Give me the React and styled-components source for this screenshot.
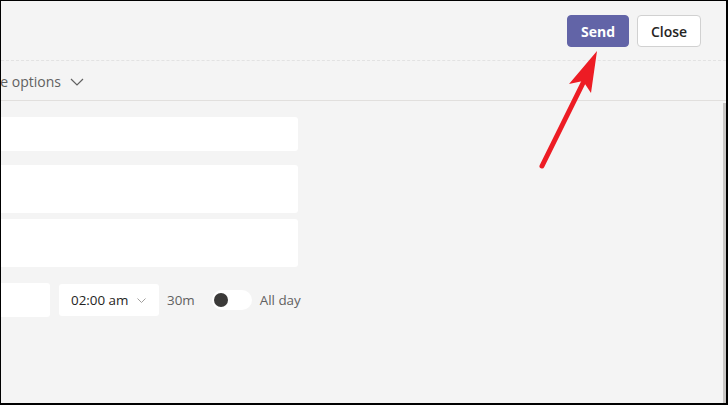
import React from "react";
import styled, { createGlobalStyle } from "styled-components";

const GlobalStyle = createGlobalStyle`
  html, body {
    margin: 0;
    padding: 0;
    background: #000;
  }
  body {
    font-family: "Open Sans", "Noto Sans", "Liberation Sans", sans-serif;
  }
`;

const Frame = styled.div`
  position: relative;
  box-sizing: border-box;
  width: 728px;
  height: 405px;
  border-style: solid;
  border-color: #000;
  border-width: 1px 2px 2px 1px;
  background: #f4f4f4;
  overflow: hidden;
  display: flex;
  flex-direction: column;
`;

const Header = styled.div`
  flex: none;
  height: 60px;
  display: flex;
  justify-content: flex-end;
  align-items: flex-start;
  gap: 8px;
  padding: 14px 25px 0 0;
  box-sizing: border-box;
  border-bottom: 1px dashed #e2e2e2;
`;

const Button = styled.button`
  box-sizing: border-box;
  height: 32px;
  padding: 0;
  width: ${(p) => (p.$primary ? "62px" : "64px")};
  border-radius: 4px;
  font-family: inherit;
  font-size: 14px;
  font-weight: ${(p) => (p.$primary ? 700 : 600)};
  color: ${(p) => (p.$primary ? "#fff" : "#252423")};
  background: ${(p) => (p.$primary ? "#6264a7" : "#fff")};
  border: 1px solid ${(p) => (p.$primary ? "#6264a7" : "#d1d1d1")};
  cursor: pointer;
`;

const OptionsRow = styled.div`
  flex: none;
  box-sizing: border-box;
  height: 40px;
  display: flex;
  align-items: center;
  padding-top: 2px;
  border-bottom: 1px solid #e1dfdd;
  color: #616161;
  font-size: 14px;
`;

const OptionsLabel = styled.div`
  width: 60px;
  display: flex;
  justify-content: flex-end;
  white-space: nowrap;
  line-height: 20px;
`;

const Chevron = styled.svg`
  margin-left: 9px;
  display: block;
`;

const Body = styled.div`
  flex: 1;
  display: flex;
`;

const Form = styled.div`
  flex: 1;
  margin-left: -120px;
  padding-top: 16px;
  display: flex;
  flex-direction: column;
`;

const Field = styled.div`
  width: 417px;
  height: ${(p) => p.$h}px;
  margin-bottom: ${(p) => p.$gap}px;
  background: #fff;
  border-radius: 3px;
`;

const DateRow = styled.div`
  display: flex;
  align-items: center;
  height: 34px;
`;

const DateBox = styled.div`
  width: 169px;
  height: 34px;
  background: #fff;
  border-radius: 3px;
`;

const TimeSelect = styled.div`
  box-sizing: border-box;
  margin-left: 9px;
  width: 100px;
  height: 32px;
  background: #fff;
  border-radius: 3px;
  display: flex;
  align-items: center;
  justify-content: space-between;
  padding: 0 13px 0 12px;
  font-size: 13.4px;
  color: #252423;
`;

const Muted = styled.span`
  font-size: 13.4px;
  color: #616161;
  margin-left: ${(p) => p.$ml}px;
`;

const Toggle = styled.div`
  margin-left: 17px;
  box-sizing: border-box;
  width: 40px;
  height: 20px;
  border-radius: 10px;
  background: #fff;
  display: flex;
  align-items: center;
  padding-left: 2px;
`;

const Knob = styled.div`
  width: 14px;
  height: 14px;
  border-radius: 50%;
  background: #3b3a39;
`;

const Scroll = styled.div`
  width: 3px;
  margin: 2px 0 0;
  background: #c8c6c4;
`;

const Arrow = styled.svg`
  position: absolute;
  left: 0;
  top: 0;
  pointer-events: none;
`;

export default function App() {
  return (
    <>
      <GlobalStyle />
      <Frame>
        <Header>
          <Button $primary>Send</Button>
          <Button>Close</Button>
        </Header>
        <OptionsRow>
          <OptionsLabel>Response options</OptionsLabel>
          <Chevron width="14" height="8" viewBox="0 0 14 8">
            <path d="M1 1 L7 7 L13 1" fill="none" stroke="#616161" strokeWidth="1.2" />
          </Chevron>
        </OptionsRow>
        <Body>
          <Form>
            <Field $h={34} $gap={14} />
            <Field $h={48} $gap={6} />
            <Field $h={48} $gap={16} />
            <DateRow>
              <DateBox />
              <TimeSelect>
                <span>02:00 am</span>
                <svg width="9" height="5" viewBox="0 0 9 5">
                  <path d="M0.5 0.5 L4.5 4.5 L8.5 0.5" fill="none" stroke="#a19f9d" strokeWidth="1" />
                </svg>
              </TimeSelect>
              <Muted $ml={8}>30m</Muted>
              <Toggle>
                <Knob />
              </Toggle>
              <Muted $ml={8}>All day</Muted>
            </DateRow>
          </Form>
          <Scroll />
        </Body>
        <Arrow width="728" height="405" viewBox="0 0 728 405">
          <line x1="541" y1="165" x2="583" y2="80" stroke="#ed1c24" strokeWidth="5" strokeLinecap="round" />
          <polygon points="596,50 568,83 582,80 590,92" fill="#ed1c24" />
        </Arrow>
      </Frame>
    </>
  );
}
